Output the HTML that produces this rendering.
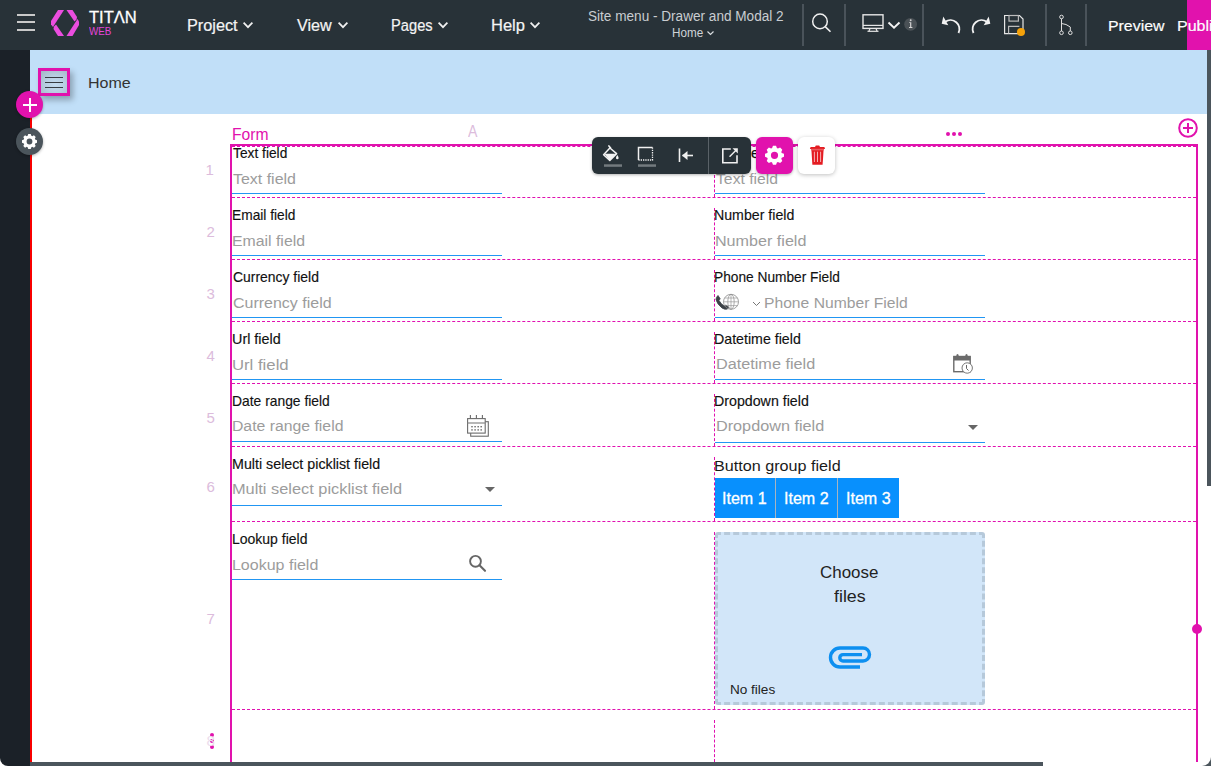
<!DOCTYPE html>
<html><head><meta charset="utf-8">
<style>
*{margin:0;padding:0;box-sizing:border-box}
html,body{width:1211px;height:766px;overflow:hidden;background:#fff;font-family:"Liberation Sans",sans-serif}
.a{position:absolute}
.t{position:absolute;white-space:nowrap;line-height:1}
#top{left:0;top:0;width:1211px;height:50px;background:#283238}
.sep{position:absolute;top:4px;width:2px;height:42px;background:#4a535a}
.menu{color:#f4f4f4;font-size:15px;letter-spacing:0.45px;-webkit-text-stroke:0.3px #f4f4f4}
.chev{position:absolute;width:7px;height:7px;border-right:1.6px solid #e8e8e8;border-bottom:1.6px solid #e8e8e8;transform:rotate(45deg)}
#left{left:0;top:50px;width:30px;height:716px;background:#1b2128;border-bottom-left-radius:8px}
#hdr{left:30px;top:50px;width:1177px;height:64px;background:#c1dff8}
#canvas{left:30px;top:114px;width:1177px;height:648px;background:#fff}
.lbl{font-size:14px;color:#111;-webkit-text-stroke:0.15px #111}
.ph{font-size:15.5px;color:#a0a0a0}
.ul{position:absolute;height:1px;background:#2196f3}
.rn{font-size:14px;color:#dcbcdc}
.hd{position:absolute;height:0;border-top:1px dashed #e010b0}
.vd{position:absolute;width:0;border-left:1px dashed #e010b0}
</style></head><body>
<div id="top" class="a"></div>
  <div class="a" style="left:17px;top:14px;width:18px;height:2px;background:#c9c9c9"></div>
  <div class="a" style="left:17px;top:21px;width:18px;height:2px;background:#c9c9c9"></div>
  <div class="a" style="left:17px;top:29px;width:18px;height:2px;background:#c9c9c9"></div>
  <svg class="a" style="left:45px;top:5px" width="40" height="36" viewBox="45 5 40 36">
    <path d="M58 10 L64 10 L53 27 L51 24.5 L51 21 Z" fill="#eb4ddf"/>
    <path d="M56 24.5 L64 36 L58 36 L53.5 29 L54 26.5 Z" fill="#eb4ddf"/>
    <path d="M72.5 36 L66.5 36 L77.5 19 L79 21.5 L79 25 Z" fill="#eb4ddf"/>
    <path d="M74.5 21.5 L66.5 10 L72.5 10 L77 17 L76.5 19.5 Z" fill="#eb4ddf"/>
  </svg>
  <svg class="a" style="left:0;top:0" width="720" height="50" viewBox="0 0 720 50">
    <polyline points="243.6,22.6 248,27.2 252.4,22.6" fill="none" stroke="#f0f0f0" stroke-width="1.7"/>
    <polyline points="338.6,22.6 343,27.2 347.4,22.6" fill="none" stroke="#f0f0f0" stroke-width="1.7"/>
    <polyline points="438.6,22.6 443,27.2 447.4,22.6" fill="none" stroke="#f0f0f0" stroke-width="1.7"/>
    <polyline points="530.6,22.6 535,27.2 539.4,22.6" fill="none" stroke="#f0f0f0" stroke-width="1.7"/>
    <polyline points="707.5,31.5 710.5,34.5 713.5,31.5" fill="none" stroke="#d8dcdf" stroke-width="1.2"/>
  </svg>
<div class="t" style="left:89.00px;top:9px;font-size:17.30px;color:#fff;transform:scaleX(0.9564);transform-origin:0.00px 0;-webkit-text-stroke:0.3px #fff;">TITΛN</div>
<div class="t" style="left:89.00px;top:26px;font-size:11.20px;color:#e545d8;transform:scaleX(0.8793);transform-origin:0.00px 0;">WEB</div>
<div class="t" style="left:186.90px;top:18px;font-size:16.00px;color:#f4f4f4;transform:scaleX(1.0172);transform-origin:1.00px 0;-webkit-text-stroke:0.2px #f4f4f4;">Project</div>
<div class="t" style="left:297.20px;top:18px;font-size:16.00px;color:#f4f4f4;transform:scaleX(1.0105);transform-origin:0.00px 0;-webkit-text-stroke:0.2px #f4f4f4;">View</div>
<div class="t" style="left:391.00px;top:18px;font-size:16.00px;color:#f4f4f4;transform:scaleX(0.9151);transform-origin:1.00px 0;-webkit-text-stroke:0.2px #f4f4f4;">Pages</div>
<div class="t" style="left:491.00px;top:18px;font-size:16.00px;color:#f4f4f4;transform:scaleX(1.0310);transform-origin:1.00px 0;-webkit-text-stroke:0.2px #f4f4f4;">Help</div>
<div class="t" style="left:587.80px;top:10px;font-size:13.80px;color:#c9cdd1;transform:scaleX(0.9851);transform-origin:0.00px 0;">Site menu - Drawer and Modal 2</div>
<div class="t" style="left:672.30px;top:27px;font-size:12.00px;color:#d0d4d8;transform:scaleX(0.9741);transform-origin:0.00px 0;">Home</div>

  <div class="sep" style="left:802px"></div>
  <div class="sep" style="left:844px"></div>
  <div class="sep" style="left:922px"></div>
  <div class="sep" style="left:1045px"></div>
  <div class="sep" style="left:1085px"></div>
  <svg class="a" style="left:810px;top:12px" width="24" height="24" viewBox="810 12 24 24">
    <circle cx="820" cy="21.4" r="7.3" fill="none" stroke="#f0f0f0" stroke-width="1.5"/>
    <line x1="825.2" y1="26.6" x2="830.5" y2="31.8" stroke="#f0f0f0" stroke-width="1.6"/>
  </svg>
  <svg class="a" style="left:860px;top:12px" width="60" height="24" viewBox="860 12 60 24">
    <rect x="863" y="14.8" width="20" height="13.6" fill="none" stroke="#e6e6e6" stroke-width="1.4"/>
    <line x1="863" y1="25.4" x2="883" y2="25.4" stroke="#e6e6e6" stroke-width="1.2"/>
    <line x1="870" y1="28.5" x2="869" y2="31" stroke="#e6e6e6" stroke-width="1.2"/>
    <line x1="876" y1="28.5" x2="877" y2="31" stroke="#e6e6e6" stroke-width="1.2"/>
    <line x1="867.5" y1="31.3" x2="878.5" y2="31.3" stroke="#e6e6e6" stroke-width="1.2"/>
    <polyline points="888.5,22.5 894,27.8 899.5,22.5" fill="none" stroke="#f4f4f4" stroke-width="1.9"/>
    <circle cx="910.6" cy="24.3" r="6.4" fill="#4a5156"/>
    <circle cx="910.7" cy="20.2" r="0.95" fill="#d4d4d4"/><path d="M909.2 22.2 H911.3 V27.1 H912.4 V28 H909 V27.1 H910.1 V23 H909.2 Z" fill="#d4d4d4"/>
  </svg>
  <svg class="a" style="left:938px;top:12px" width="90" height="26" viewBox="938 12 90 26">
    <path d="M958.5 33 A9 9 0 0 0 945.3 21.7" fill="none" stroke="#f2f2f2" stroke-width="1.9"/>
    <path d="M943.3 16.6 L941.7 23.7 L948.3 25.2 Z" fill="#f2f2f2"/>
    <path d="M973.5 33 A9 9 0 0 1 986.7 21.7" fill="none" stroke="#f2f2f2" stroke-width="1.9"/>
    <path d="M988.7 16.6 L990.3 23.7 L983.7 25.2 Z" fill="#f2f2f2"/>
    <path d="M1004.6 15.5 H1019.5 L1023 19 V33.6 H1004.6 Z" fill="none" stroke="#e6e6e6" stroke-width="1.2"/>
    <rect x="1009" y="15.5" width="9.4" height="5.6" fill="none" stroke="#bbb" stroke-width="1.2"/>
    <path d="M1008.6 33.6 V26.3 H1019.4" fill="none" stroke="#bbb" stroke-width="1.2"/>
    <circle cx="1021" cy="32" r="4" fill="#f5a20a"/>
  </svg>
  <svg class="a" style="left:1052px;top:10px" width="26" height="30" viewBox="1052 10 26 30">
    <circle cx="1061.5" cy="17" r="1.8" fill="none" stroke="#e0e0e0" stroke-width="1"/>
    <circle cx="1061.5" cy="32.8" r="1.8" fill="none" stroke="#e0e0e0" stroke-width="1"/>
    <circle cx="1070.3" cy="32.8" r="1.8" fill="none" stroke="#e0e0e0" stroke-width="1"/>
    <path d="M1061.5 18.8 V31 M1061.5 23.5 L1066 24.5 L1070.3 27 V31" fill="none" stroke="#e0e0e0" stroke-width="1"/>
  </svg>
  <div class="a" style="left:1187px;top:0;width:24px;height:50px;background:#e112ad"></div>
<div class="t" style="left:1107.80px;top:18px;font-size:15.30px;color:#fff;transform:scaleX(1.0394);transform-origin:1.00px 0;-webkit-text-stroke:0.2px #f4f4f4;">Preview</div>
<div class="t" style="left:1176.70px;top:18px;font-size:15.30px;color:#fff;transform:scaleX(1.0480);transform-origin:1.00px 0;-webkit-text-stroke:0.2px #f4f4f4;">Publish</div>
<div id="left" class="a"></div>
<div id="hdr" class="a">
  <div class="a" style="left:8px;top:18px;width:32px;height:28px;border:3px solid #e112ad;background:radial-gradient(ellipse at 55% 60%,#c4dcf0 0%,#b8cfe2 45%,#a3b6c4 100%);box-shadow:3px 4px 6px rgba(0,0,0,0.28)"></div>
  <div class="a" style="left:15px;top:26.5px;width:18px;height:1.6px;background:#383d43"></div>
  <div class="a" style="left:15px;top:31.5px;width:18px;height:1.6px;background:#383d43"></div>
  <div class="a" style="left:15px;top:36.5px;width:18px;height:1.6px;background:#383d43"></div>
</div>
<div class="t" style="left:87.90px;top:75px;font-size:15.50px;color:#333;transform:scaleX(1.0346);transform-origin:1.00px 0;">Home</div>

<div id="canvas" class="a"></div>
<div class="a" style="left:30px;top:114px;width:2px;height:648px;background:#f80000"></div>
<div class="a" style="left:16px;top:91px;width:27px;height:27px;border-radius:50%;background:#e112ad;box-shadow:0 1px 3px rgba(0,0,0,.3)"></div>
<div class="a" style="left:23px;top:104px;width:14px;height:2px;background:#fff"></div>
<div class="a" style="left:29px;top:98px;width:2px;height:14px;background:#fff"></div>
<div class="a" style="left:16px;top:128px;width:27px;height:27px;border-radius:50%;background:#4b555c;box-shadow:0 1px 3px rgba(0,0,0,.3)"></div>
<svg class="a" style="left:16px;top:128px" width="27" height="27" viewBox="0 0 27 27"><path fill="#fff" fill-rule="evenodd" d="M19.19 11.61 L21.00 12.28 L21.00 14.72 L19.19 15.39 L18.86 16.19 L19.67 17.94 L17.94 19.67 L16.19 18.86 L15.39 19.19 L14.72 21.00 L12.28 21.00 L11.61 19.19 L10.81 18.86 L9.06 19.67 L7.33 17.94 L8.14 16.19 L7.81 15.39 L6.00 14.72 L6.00 12.28 L7.81 11.61 L8.14 10.81 L7.33 9.06 L9.06 7.33 L10.81 8.14 L11.61 7.81 L12.28 6.00 L14.72 6.00 L15.39 7.81 L16.19 8.14 L17.94 7.33 L19.67 9.06 L18.86 10.81 Z M10.60 13.50 a2.90 2.90 0 1 0 5.80 0 a2.90 2.90 0 1 0 -5.80 0 Z"/></svg>
<div class="t" style="left:231.50px;top:127px;font-size:15.70px;color:#e112ad;transform:scaleX(0.9991);transform-origin:1.00px 0;">Form</div>
<div class="t" style="left:467.70px;top:124px;font-size:15.70px;color:#dcbcdc;transform:scaleX(0.9000);transform-origin:0.00px 0;">A</div>
<div class="a" style="left:945.9px;top:131.9px;width:4px;height:4px;border-radius:50%;background:#e112ad"></div>
<div class="a" style="left:951.9px;top:131.9px;width:4px;height:4px;border-radius:50%;background:#e112ad"></div>
<div class="a" style="left:957.9px;top:131.9px;width:4px;height:4px;border-radius:50%;background:#e112ad"></div>
<svg class="a" style="left:1176px;top:116px" width="24" height="24" viewBox="1176 116 24 24">
  <circle cx="1188" cy="128" r="8.8" fill="none" stroke="#e112ad" stroke-width="2"/>
  <path d="M1188 123 V133 M1183 128 H1193" stroke="#e112ad" stroke-width="2"/>
</svg>
<div class="a" style="left:230px;top:144px;width:968px;height:618px;border:2px solid #e112ad;border-bottom:none"></div>
<div class="hd" style="left:232px;top:146px;width:964px"></div>
<div class="hd" style="left:232px;top:197px;width:964px"></div>
<div class="hd" style="left:232px;top:259px;width:964px"></div>
<div class="hd" style="left:232px;top:321px;width:964px"></div>
<div class="hd" style="left:232px;top:383px;width:964px"></div>
<div class="hd" style="left:232px;top:446px;width:964px"></div>
<div class="hd" style="left:232px;top:521px;width:964px"></div>
<div class="hd" style="left:232px;top:709px;width:964px"></div>
<div class="vd" style="left:714px;top:156px;height:41px"></div>
<div class="vd" style="left:714px;top:208px;height:51px"></div>
<div class="vd" style="left:714px;top:270px;height:51px"></div>
<div class="vd" style="left:714px;top:332px;height:51px"></div>
<div class="vd" style="left:714px;top:394px;height:52px"></div>
<div class="vd" style="left:714px;top:457px;height:64px"></div>
<div class="vd" style="left:714px;top:532px;height:177px"></div>
<div class="vd" style="left:714px;top:720px;height:42px"></div>
<div class="a" style="left:1192px;top:624px;width:10px;height:10px;border-radius:50%;background:#e112ad"></div>
<div class="t" style="left:205.50px;top:162px;font-size:15.00px;color:#dcbcdc;">1</div>
<div class="t" style="left:206.50px;top:224px;font-size:15.00px;color:#dcbcdc;">2</div>
<div class="t" style="left:206.50px;top:286px;font-size:15.00px;color:#dcbcdc;">3</div>
<div class="t" style="left:206.50px;top:348px;font-size:15.00px;color:#dcbcdc;">4</div>
<div class="t" style="left:206.50px;top:410px;font-size:15.00px;color:#dcbcdc;">5</div>
<div class="t" style="left:206.50px;top:479px;font-size:15.00px;color:#dcbcdc;">6</div>
<div class="t" style="left:206.50px;top:611px;font-size:15.00px;color:#dcbcdc;">7</div>
<div class="a" style="left:210px;top:732.8px;width:4px;height:4px;border-radius:50%;background:#e112ad"></div>
<div class="a" style="left:210px;top:739.0px;width:4px;height:4px;border-radius:50%;background:#e112ad"></div>
<div class="a" style="left:210px;top:745.0px;width:4px;height:4px;border-radius:50%;background:#e112ad"></div>
<div class="t" style="left:233.20px;top:146px;font-size:14.40px;color:#111;transform:scaleX(0.9562);transform-origin:0.00px 0;-webkit-text-stroke:0.15px #111;">Text field</div>
<div class="t" style="left:233.00px;top:171px;font-size:15.30px;color:#9c9c9c;transform:scaleX(1.0425);transform-origin:0.00px 0;">Text field</div>
<div class="ul" style="left:232px;top:193px;width:270px"></div>
<div class="t" style="left:232.20px;top:208px;font-size:14.40px;color:#111;transform:scaleX(0.9545);transform-origin:1.00px 0;-webkit-text-stroke:0.15px #111;">Email field</div>
<div class="t" style="left:232.00px;top:233px;font-size:15.30px;color:#9c9c9c;transform:scaleX(1.0354);transform-origin:1.00px 0;">Email field</div>
<div class="ul" style="left:232px;top:255px;width:270px"></div>
<div class="t" style="left:233.20px;top:270px;font-size:14.40px;color:#111;transform:scaleX(0.9677);transform-origin:0.00px 0;-webkit-text-stroke:0.15px #111;">Currency field</div>
<div class="t" style="left:233.00px;top:295px;font-size:15.30px;color:#9c9c9c;transform:scaleX(1.0452);transform-origin:0.00px 0;">Currency field</div>
<div class="ul" style="left:232px;top:317px;width:270px"></div>
<div class="t" style="left:232.20px;top:332px;font-size:14.40px;color:#111;transform:scaleX(0.9984);transform-origin:1.00px 0;-webkit-text-stroke:0.15px #111;">Url field</div>
<div class="t" style="left:232.00px;top:357px;font-size:15.30px;color:#9c9c9c;transform:scaleX(1.0945);transform-origin:1.00px 0;">Url field</div>
<div class="ul" style="left:232px;top:379px;width:270px"></div>
<div class="t" style="left:232.20px;top:394px;font-size:14.40px;color:#111;transform:scaleX(0.9623);transform-origin:1.00px 0;-webkit-text-stroke:0.15px #111;">Date range field</div>
<div class="t" style="left:232.00px;top:418px;font-size:15.30px;color:#9c9c9c;transform:scaleX(1.0320);transform-origin:1.00px 0;">Date range field</div>
<div class="ul" style="left:232px;top:441px;width:270px"></div>
<div class="t" style="left:232.20px;top:457px;font-size:14.40px;color:#111;transform:scaleX(0.9909);transform-origin:1.00px 0;-webkit-text-stroke:0.15px #111;">Multi select picklist field</div>
<div class="t" style="left:232.30px;top:481px;font-size:15.30px;color:#9c9c9c;transform:scaleX(1.0701);transform-origin:1.00px 0;">Multi select picklist field</div>
<div class="ul" style="left:232px;top:505px;width:270px"></div>
<div class="t" style="left:232.20px;top:532px;font-size:14.40px;color:#111;transform:scaleX(0.9712);transform-origin:1.00px 0;-webkit-text-stroke:0.15px #111;">Lookup field</div>
<div class="t" style="left:232.00px;top:557px;font-size:15.30px;color:#9c9c9c;transform:scaleX(1.0470);transform-origin:1.00px 0;">Lookup field</div>
<div class="ul" style="left:232px;top:579px;width:270px"></div>
<div class="t" style="left:715.60px;top:171px;font-size:15.30px;color:#9c9c9c;transform:scaleX(1.0291);transform-origin:0.00px 0;">Text field</div>
<div class="ul" style="left:715px;top:193px;width:270px"></div>
<div class="t" style="left:751.00px;top:146px;font-size:14.40px;color:#111;-webkit-text-stroke:0.25px #111;">e</div>
<div class="t" style="left:713.80px;top:208px;font-size:14.40px;color:#111;transform:scaleX(0.9842);transform-origin:1.00px 0;-webkit-text-stroke:0.15px #111;">Number field</div>
<div class="t" style="left:714.60px;top:233px;font-size:15.30px;color:#9c9c9c;transform:scaleX(1.0550);transform-origin:1.00px 0;">Number field</div>
<div class="ul" style="left:715px;top:255px;width:270px"></div>
<div class="t" style="left:714.40px;top:270px;font-size:14.40px;color:#111;transform:scaleX(0.9528);transform-origin:1.00px 0;-webkit-text-stroke:0.15px #111;">Phone Number Field</div>
<div class="t" style="left:764.00px;top:295px;font-size:15.30px;color:#9c9c9c;transform:scaleX(1.0246);transform-origin:1.00px 0;">Phone Number Field</div>
<div class="ul" style="left:715px;top:317px;width:270px"></div>
<div class="t" style="left:714.40px;top:332px;font-size:14.40px;color:#111;transform:scaleX(0.9865);transform-origin:1.00px 0;-webkit-text-stroke:0.15px #111;">Datetime field</div>
<div class="t" style="left:715.90px;top:356px;font-size:15.30px;color:#9c9c9c;transform:scaleX(1.0618);transform-origin:1.00px 0;">Datetime field</div>
<div class="ul" style="left:715px;top:379px;width:270px"></div>
<div class="t" style="left:714.40px;top:394px;font-size:14.40px;color:#111;transform:scaleX(0.9875);transform-origin:1.00px 0;-webkit-text-stroke:0.15px #111;">Dropdown field</div>
<div class="t" style="left:715.90px;top:418px;font-size:15.30px;color:#9c9c9c;transform:scaleX(1.0614);transform-origin:1.00px 0;">Dropdown field</div>
<div class="ul" style="left:715px;top:442px;width:270px"></div>
<div class="a" style="left:485px;top:487px;width:0;height:0;border-left:5px solid transparent;border-right:5px solid transparent;border-top:5px solid #666"></div>
<div class="a" style="left:968px;top:425px;width:0;height:0;border-left:5px solid transparent;border-right:5px solid transparent;border-top:5px solid #666"></div>
<svg class="a" style="left:700px;top:280px" width="300" height="110" viewBox="700 280 300 110">
  <path d="M717.5 296 Q716 297.5 716 299.5 Q717 304 722 308 Q725 310 727.5 309 L728.8 307.5 L726 305 L724.2 306 Q721 304 719 300.5 L720.2 298.8 L718 295.5 Z" fill="#3c4247" stroke="#3c4247" stroke-width="0.8" stroke-linejoin="round"/>
  <circle cx="731" cy="301.8" r="7.5" fill="none" stroke="#8a8a8a" stroke-width="0.8"/>
  <ellipse cx="731" cy="301.8" rx="3.2" ry="7.5" fill="none" stroke="#8a8a8a" stroke-width="0.7"/>
  <path d="M723.5 301.8 H738.5 M724.5 298 H737.5 M724.5 305.6 H737.5 M731 294.3 V309.3" stroke="#9a9a9a" stroke-width="0.7"/>
  <polyline points="753,302 756.5,305.5 760,302" fill="none" stroke="#777" stroke-width="1"/>
  <rect x="953.8" y="356.5" width="16.4" height="15.2" fill="none" stroke="#6b6b6b" stroke-width="1.4"/>
  <rect x="953.8" y="356.5" width="16.4" height="4" fill="#6b6b6b"/>
  <ellipse cx="957.5" cy="355.8" rx="1.2" ry="1.8" fill="#6b6b6b"/>
  <ellipse cx="966.5" cy="355.8" rx="1.2" ry="1.8" fill="#6b6b6b"/>
  <circle cx="967.2" cy="368" r="5.2" fill="#fff" stroke="#777" stroke-width="1"/>
  <polyline points="966.5,365 966.5,368.5 968.5,370.5" fill="none" stroke="#666" stroke-width="1"/>
</svg>
<svg class="a" style="left:460px;top:410px" width="40" height="170" viewBox="460 410 40 170">
  <rect x="470.7" y="421.7" width="17.6" height="14.5" fill="#fff" stroke="#6b6b6b" stroke-width="1.1"/>
  <rect x="467.6" y="418.6" width="17.6" height="14.5" fill="#fff" stroke="#6b6b6b" stroke-width="1.1"/>
  <path d="M470.4 415 V418.6 M476.4 415 V418.6 M482.4 415 V418.6" stroke="#6b6b6b" stroke-width="1.1"/>
  <line x1="467.6" y1="423" x2="485.2" y2="423" stroke="#888" stroke-width="1.2"/>
  <g fill="#777"><rect x="471.2" y="426" width="1.6" height="1.4"/><rect x="474.3" y="426" width="1.6" height="1.4"/><rect x="477.4" y="426" width="1.6" height="1.4"/><rect x="480.4" y="426" width="1.6" height="1.4"/>
  <rect x="471.2" y="429.2" width="1.6" height="1.4"/><rect x="474.3" y="429.2" width="1.6" height="1.4"/><rect x="477.4" y="429.2" width="1.6" height="1.4"/><rect x="480.4" y="429.2" width="1.6" height="1.4"/></g>
  <circle cx="475.5" cy="561.3" r="5.4" fill="none" stroke="#666" stroke-width="1.9"/>
  <line x1="479.5" y1="565.3" x2="485" y2="570.8" stroke="#666" stroke-width="2.1" stroke-linecap="round"/>
</svg>
<div class="t" style="left:206.50px;top:733px;font-size:15.00px;color:#ecdcec;">8</div>
<div class="t" style="left:714.20px;top:458px;font-size:15.10px;color:#1a1a1a;transform:scaleX(1.0708);transform-origin:1.00px 0;">Button group field</div>
<div class="a" style="left:715px;top:478px;width:184px;height:40px;background:#0890fd"></div>
<div class="a" style="left:775px;top:478px;width:1px;height:40px;background:#a8b4c0"></div>
<div class="a" style="left:837px;top:478px;width:1px;height:40px;background:#a8b4c0"></div>
<div class="t" style="left:722.20px;top:491px;font-size:16.00px;color:#fff;transform:scaleX(1.0032);transform-origin:1.00px 0;-webkit-text-stroke:0.3px #fff;">Item 1</div>
<div class="t" style="left:784.00px;top:491px;font-size:16.00px;color:#fff;transform:scaleX(1.0032);transform-origin:1.00px 0;-webkit-text-stroke:0.3px #fff;">Item 2</div>
<div class="t" style="left:845.80px;top:491px;font-size:16.00px;color:#fff;transform:scaleX(1.0032);transform-origin:1.00px 0;-webkit-text-stroke:0.3px #fff;">Item 3</div>
<div class="a" style="left:715px;top:532px;width:270px;height:173px;background:#d2e6f9;border:3px dashed #b6c9da;border-radius:3px"></div>
<div class="t" style="left:820.40px;top:565px;font-size:16.70px;color:#222;transform:scaleX(1.0151);transform-origin:0.00px 0;">Choose</div>
<div class="t" style="left:833.90px;top:589px;font-size:16.70px;color:#222;transform:scaleX(1.0671);transform-origin:0.00px 0;">files</div>
<div class="t" style="left:729.70px;top:684px;font-size:12.40px;color:#222;transform:scaleX(1.0967);transform-origin:1.00px 0;">No files</div>
<svg class="a" style="left:826px;top:644px" width="46" height="26" viewBox="826 644 46 26">
  <path d="M860 667 H840 A9.5 9.5 0 0 1 840 648 H863 A6.5 6.5 0 0 1 863 661 H843 A3.2 3.2 0 0 1 843 654.6 H862" fill="none" stroke="#0d8ff0" stroke-width="3.4"/>
</svg>
<div class="a" style="left:592px;top:137px;width:159px;height:37px;border-radius:6px;background:#283238;box-shadow:0 1px 3px rgba(0,0,0,.3)"></div>
<div class="a" style="left:708px;top:137px;width:1px;height:37px;background:#5a6268"></div>
<div class="a" style="left:756px;top:137px;width:37px;height:37px;border-radius:6px;background:#e112ad;box-shadow:0 1px 3px rgba(0,0,0,.3)"></div>
<svg class="a" style="left:756px;top:137px" width="37" height="37" viewBox="0 0 37 37"><path fill="#fff" fill-rule="evenodd" d="M25.71 15.90 L27.97 16.76 L27.97 19.84 L25.71 20.70 L25.29 21.71 L26.29 23.91 L24.11 26.09 L21.91 25.09 L20.90 25.51 L20.04 27.77 L16.96 27.77 L16.10 25.51 L15.09 25.09 L12.89 26.09 L10.71 23.91 L11.71 21.71 L11.29 20.70 L9.03 19.84 L9.03 16.76 L11.29 15.90 L11.71 14.89 L10.71 12.69 L12.89 10.51 L15.09 11.51 L16.10 11.09 L16.96 8.83 L20.04 8.83 L20.90 11.09 L21.91 11.51 L24.11 10.51 L26.29 12.69 L25.29 14.89 Z M14.90 18.30 a3.60 3.60 0 1 0 7.20 0 a3.60 3.60 0 1 0 -7.20 0 Z"/></svg>
<div class="a" style="left:798px;top:137px;width:37px;height:37px;border-radius:6px;background:#fff;box-shadow:0 1px 4px rgba(0,0,0,.25)"></div>
<svg class="a" style="left:592px;top:137px" width="245" height="37" viewBox="592 137 245 37">
  <path d="M603.6 154.8 L609.9 148 L616.6 153.6 L609.8 160.4 Z" fill="none" stroke="#f4f4f4" stroke-width="1.5" stroke-linejoin="round"/>
  <path d="M604.4 153.8 H615.6 L609.8 160.4 Z" fill="#f4f4f4"/>
  <line x1="608.9" y1="145.9" x2="610.6" y2="148" stroke="#f4f4f4" stroke-width="1.6" stroke-linecap="round"/>
  <path d="M617.3 155 Q615.9 157.2 616 158 A1.3 1.3 0 0 0 618.6 158 Q618.7 157.2 617.3 155 Z" fill="#f4f4f4"/>
  <rect x="604" y="164.3" width="18" height="2.5" fill="#737a7e"/>
  <path d="M638.5 160 V147.5 H652.5" fill="none" stroke="#f0f0f0" stroke-width="1.5"/>
  <path d="M652.5 147.5 V160 H638.5" fill="none" stroke="#f0f0f0" stroke-width="1.3" stroke-dasharray="1.3 1"/>
  <rect x="638" y="164.3" width="18" height="2.5" fill="#737a7e"/>
  <line x1="679.5" y1="148.5" x2="679.5" y2="162" stroke="#f0f0f0" stroke-width="1.6"/>
  <line x1="682.5" y1="155.5" x2="693" y2="155.5" stroke="#f0f0f0" stroke-width="1.6"/>
  <path d="M682 155.5 L687.5 151 V160 Z" fill="#f0f0f0"/>
  <path d="M730.8 149 H722.8 V162.8 H737 V155.3" fill="none" stroke="#f0f0f0" stroke-width="1.6"/>
  <path d="M730 156.3 L736.5 149.8" fill="none" stroke="#f0f0f0" stroke-width="1.5" stroke-linecap="round"/>
  <path d="M732.5 148.2 H737.8 V153.5 Z" fill="#f0f0f0"/>
  <path d="M811.3 148.5 H823.7 L822.6 164.7 H812.4 Z" fill="#e41c22"/>
  <path d="M809.9 149 L810.6 146.9 H815 L815.8 145.6 H819.2 L820 146.9 H824.4 L825 149 Z" fill="#e41c22"/>
  <rect x="811.3" y="148.8" width="12.4" height="1.6" fill="#ea5a5e"/>
  <path d="M814.4 151.7 V162 M817.5 151.7 V162 M820.6 151.7 V162" stroke="#fbe0e0" stroke-width="0.75"/>
</svg>
<div class="a" style="left:1207px;top:50px;width:4px;height:436px;background:#4b555c"></div>
<div class="a" style="left:30px;top:762px;width:1013px;height:4px;background:#4b555c"></div>
<div class="a" style="left:1199px;top:754px;width:12px;height:12px;background:#4b555c"></div>
<div class="a" style="left:1189px;top:744px;width:22px;height:22px;background:#fff;border-bottom-right-radius:9px"></div>
<div class="a" style="left:1196px;top:744px;width:2px;height:18px;background:#e112ad"></div>
</body></html>
